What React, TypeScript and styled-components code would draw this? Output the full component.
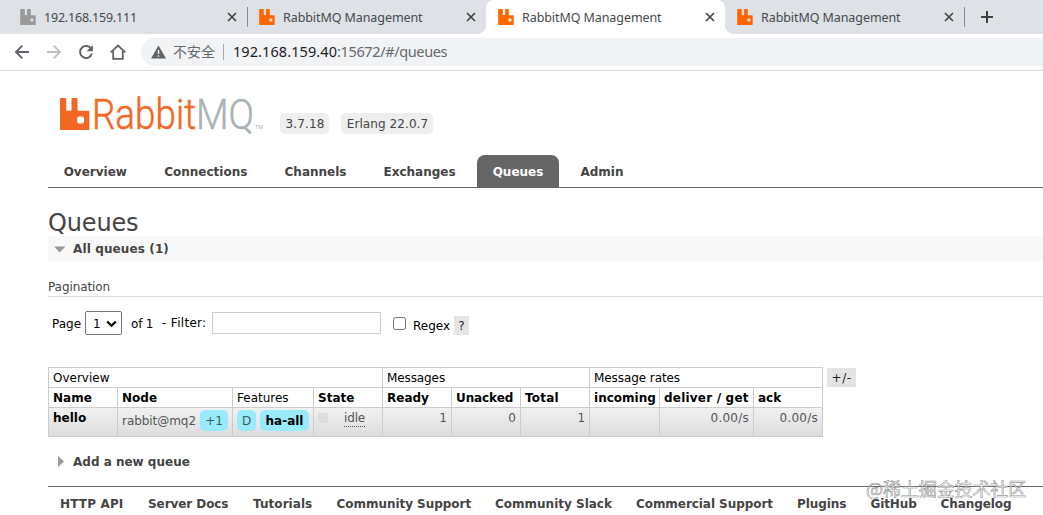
import React from 'react';
import styled, { createGlobalStyle, css } from 'styled-components';

const Global = createGlobalStyle`
  *, *::before, *::after { box-sizing: border-box; }
  html, body { margin: 0; background: #fff; }
  body {
    height: 515px;
    overflow: hidden;
    font: 12px/20px "DejaVu Sans", Verdana, sans-serif;
    color: #444;
  }
`;

const Page = styled.div`
  position: relative;
  height: 515px;
  overflow: hidden;
`;

/* Browser chrome */

const TabStrip = styled.div`
  display: flex;
  height: 34px;
  padding-left: 8px;
  background: #dee1e6;
`;

const BrowserTab = styled.div<{ $active?: boolean; $divider?: boolean }>`
  position: relative;
  display: flex;
  align-items: center;
  width: 239px;
  height: 34px;
  padding: 0 9px 0 12px;
  font: 12.5px/18px "Noto Sans", sans-serif;
  color: #45494d;
  ${p => p.$divider && css`
    &::after {
      content: '';
      position: absolute;
      right: -1px;
      top: 7px;
      width: 1px;
      height: 20px;
      background: #85888c;
    }
  `}
  ${p => p.$active && css`
    background: #fff;
    border-radius: 8px 8px 0 0;
    &::before, &::after {
      content: '';
      position: absolute;
      bottom: 0;
      width: 8px;
      height: 8px;
    }
    &::before {
      left: -8px;
      background: radial-gradient(circle at 0 0, #dee1e6 7.5px, #fff 8px);
    }
    &::after {
      right: -8px;
      background: radial-gradient(circle at 100% 0, #dee1e6 7.5px, #fff 8px);
    }
  `}
`;

const TabTitle = styled.span<{ $spacing: number }>`
  flex: 1;
  margin-left: 8px;
  padding-top: 1px;
  letter-spacing: ${p => p.$spacing}px;
  white-space: nowrap;
`;

const NewTab = styled.div`
  display: flex;
  align-items: center;
  margin-left: 16px;
`;

const Toolbar = styled.div`
  display: flex;
  align-items: center;
  height: 37px;
  padding: 0 0 1px 14px;
  border-bottom: 1px solid #d5d7da;
  background: #fff;
`;

const ToolButton = styled.span<{ $gap: number }>`
  display: flex;
  width: 16px;
  margin-right: ${p => p.$gap}px;
`;

const AddressBar = styled.div`
  display: flex;
  flex: 1;
  align-items: center;
  height: 28px;
  padding-left: 10px;
  border-radius: 14px 0 0 14px;
  background: #f1f3f4;
  font: 14.5px/20px "Noto Sans", "Noto Sans CJK SC", sans-serif;
  color: #66696d;
  white-space: nowrap;
`;

const Insecure = styled.span`
  margin: 0 9px 0 7px;
  padding-right: 8px;
  border-right: 1px solid #a5a8ac;
  font: 14px/14px "Noto Sans CJK SC", sans-serif;
  padding-bottom: 2px;
`;

const Host = styled.span`
  padding-bottom: 2px;
  color: #202124;
  letter-spacing: 0.08px;
`;

const Path = styled.span`
  padding-bottom: 2px;
  letter-spacing: -0.37px;
`;

/* Page */

const Content = styled.div`
  padding-left: 48px;
`;

const Header = styled.header`
  display: flex;
  height: 84px;
  padding: 24px 0 0 12px;
`;

const LogoBox = styled.div`
  width: 220px;
  height: 42px;
`;

const Version = styled.span<{ $width: number; $spacing: number }>`
  width: ${p => p.$width}px;
  height: 21px;
  margin: 18px 12px 0 0;
  padding-left: 1px;
  border-radius: 5px;
  background: #eee;
  text-align: center;
  line-height: 22px;
  letter-spacing: ${p => p.$spacing}px;
`;

const Nav = styled.nav`
  display: flex;
  height: 33px;
  border-bottom: 1px solid #666;
`;

const NavItem = styled.a<{ $width: number; $selected?: boolean }>`
  width: ${p => p.$width}px;
  height: 32px;
  margin-right: 6px;
  border-radius: 8px 8px 0 0;
  text-align: center;
  font-weight: bold;
  line-height: 34px;
  ${p => p.$selected && css`
    background: #666;
    color: #fff;
  `}
`;

const Title = styled.h1`
  height: 48px;
  margin: 0;
  padding-top: 21px;
  font-size: 24px;
  font-weight: normal;
  line-height: 29px;
  letter-spacing: -0.15px;
`;

const SectionBar = styled.h2<{ $open?: boolean }>`
  display: flex;
  align-items: center;
  height: 25px;
  margin: 0;
  padding-left: 6px;
  background: ${p => (p.$open ? '#f8f8f8' : 'transparent')};
  font-size: 12px;
  letter-spacing: ${p => (p.$open ? 0.12 : 0)}px;
`;

const Arrow = styled.svg`
  width: 12px;
  height: 12px;
  margin-right: 7px;
  fill: #999;
`;

const Pagination = styled.h3`
  height: 36px;
  margin: 0;
  padding-top: 16px;
  border-bottom: 1px solid #ddd;
  font-size: 12px;
  font-weight: normal;
  line-height: 20px;
  letter-spacing: -0.08px;
`;

const FilterRow = styled.div`
  display: flex;
  align-items: center;
  height: 70px;
  padding: 0 0 18px 4px;
  color: #000;
  white-space: pre;
`;

const PageLabel = styled.span`
  padding-top: 1px;
`;

const PageSelect = styled.span`
  display: flex;
  align-items: center;
  justify-content: space-between;
  width: 37px;
  height: 24px;
  margin: 0 9px 0 4px;
  padding: 1px 4px 0 7px;
  border: 1px solid #767676;
  border-radius: 2px;
`;

const OfPages = styled.span`
  width: 31px;
  padding-top: 1px;
  letter-spacing: -0.2px;
`;

const FilterLabel = styled.span`
  letter-spacing: 0.3px;
`;

const FilterInput = styled.input`
  width: 169px;
  height: 22px;
  margin: 0 12px 0 5.5px;
  border: 1px solid #ccc;
  outline: none;
`;

const RegexBox = styled.span`
  width: 13px;
  height: 13px;
  margin-right: 7px;
  border: 1px solid #767676;
  border-radius: 2.5px;
`;

const RegexLabel = styled.span`
  padding-top: 5px;
`;

const Chip = styled.span<{ $width: number; $spacing?: number }>`
  width: ${p => p.$width}px;
  height: 19px;
  background: #e4e4e4;
  color: #222;
  text-align: center;
  line-height: 20px;
  letter-spacing: ${p => p.$spacing ?? 0}px;
`;

const Help = styled(Chip)`
  margin: 5px 0 0 4px;
`;

const ColumnToggle = styled(Chip)`
  margin-top: 1px;
`;

const TableRow = styled.div`
  display: flex;
  align-items: flex-start;
  gap: 4px;
`;

const Table = styled.table`
  width: 775px;
  table-layout: fixed;
  border-spacing: 0;
  border: solid #ccc;
  border-width: 1px 0 0 1px;
  color: #000;
`;

const HeadCell = styled.th<{ $plain?: boolean; $spacing?: number }>`
  height: 20px;
  padding: 1px 4px 0;
  border: solid #ccc;
  border-width: 0 1px 1px 0;
  text-align: left;
  font-weight: ${p => (p.$plain ? 'normal' : 'bold')};
  line-height: 18px;
  letter-spacing: ${p => p.$spacing ?? 0}px;
  white-space: nowrap;
`;

const BodyRow = styled.tr`
  background: linear-gradient(#f1f1f1, #dcdcdc);
`;

const Cell = styled.td<{ $align?: string; $strong?: boolean; $spacing?: number }>`
  height: 29px;
  padding: 0 4px;
  border: solid #ccc;
  border-width: 0 1px 1px 0;
  vertical-align: top;
  text-align: ${p => p.$align ?? 'left'};
  line-height: 20px;
  letter-spacing: ${p => p.$spacing ?? 0}px;
  font-weight: ${p => (p.$strong ? 'bold' : 'normal')};
  color: ${p => (p.$strong ? '#000' : '#555')};
  white-space: nowrap;
`;

const Inline = styled.div`
  display: flex;
  align-items: center;
  gap: 4px;
  padding-top: 2px;
`;

const NodeName = styled.span`
  width: 74px;
  letter-spacing: -0.05px;
`;

const Tag = styled.span<{ $width: number; $strong?: boolean }>`
  width: ${p => p.$width}px;
  height: 21px;
  border-radius: 5px;
  background: #98eafc;
  text-align: center;
  line-height: 22px;
  font-weight: ${p => (p.$strong ? 'bold' : 'normal')};
  color: ${p => (p.$strong ? '#000' : '#3c5a60')};
`;

const State = styled.div`
  display: flex;
  align-items: center;
  gap: 16px;
  height: 20px;
`;

const StateDot = styled.span`
  width: 10px;
  height: 10px;
  background: #ddd;
`;

const StateText = styled.span`
  height: 17px;
  border-bottom: 1px dotted #555;
  line-height: 17px;
  letter-spacing: -0.15px;
`;

const AddQueue = styled.div`
  padding-top: 12px;
`;

const Footer = styled.footer`
  display: flex;
  gap: 24px;
  margin-top: 12px;
  padding: 6px 0 0 12px;
  border-top: 1px solid #666;
  font-weight: bold;
  line-height: 22px;
`;

const FooterLink = styled.a<{ $width: number; $spacing: number }>`
  width: ${p => p.$width}px;
  letter-spacing: ${p => p.$spacing}px;
  white-space: nowrap;
`;

const Watermark = styled.div`
  position: absolute;
  left: 866px;
  top: 475px;
  font: 18px/26px "Noto Sans CJK SC", sans-serif;
  letter-spacing: -0.1px;
  color: rgba(255, 255, 255, 0.75);
  -webkit-text-stroke: 0.6px rgba(120, 120, 120, 0.8);
  white-space: nowrap;
`;

const Favicon = ({ color = '#f60' }: { color?: string }) => (
  <svg width="16" height="16" viewBox="0 0 16 16">
    <path
      fill={color}
      fillRule="evenodd"
      d="M.8 0h3.400q.6 0 .6.600v5q0 .6.600.600h1.100q.6 0 .6-.600v-5q0-.6.600-.600h2.500q.6 0 .6.600v5q0 .6.600.600h3.700q.6 0 .6.600v8.600q0 .6-.6.600H.8q-.6 0-.6-.6V.6Q.2 0 .8 0zM11.400 9.600a1 1 0 0 0-1 1v1a1 1 0 0 0 1 1h1a1 1 0 0 0 1-1v-1a1 1 0 0 0-1-1z"
    />
  </svg>
);

const Close = () => (
  <svg width="12" height="12" viewBox="0 0 12 12" fill="none" stroke="#3c4043" strokeWidth="1.6">
    <path d="M2 2l8 8M10 2l-8 8" />
  </svg>
);

const Logo = () => (
  <svg width="220" height="42" viewBox="0 0 220 42">
    <path
      fill="#f26724"
      fillRule="evenodd"
      d="M.8 3h4.600q.8 0 .8.800v11.200q0 .8.800.800h3.700q.8 0 .8-.800V3.800q0-.8.800-.800h4.400q.8 0 .8.800v11.200q0 .8.800.800h10.300q.8 0 .8.800v17.600q0 .8-.8.800H.8q-.8 0-.8-.8V3.800q0-.8.800-.800zM19 21.500a1.800 1.800 0 0 0-1.800 1.800v3.400a1.800 1.800 0 0 0 1.800 1.800h3.200a1.800 1.800 0 0 0 1.800-1.800v-3.400a1.800 1.800 0 0 0-1.800-1.800z"
    />
    <g fontFamily="Roboto, sans-serif" fontWeight="300" fontSize="42.500">
      <text x="32" y="33.700" fill="#f26724" stroke="#f26724" strokeWidth="0.5" textLength="104" lengthAdjust="spacingAndGlyphs">Rabbit</text>
      <text x="136" y="33.700" fill="#a9b3b1" stroke="#a9b3b1" strokeWidth="0.5" textLength="58" lengthAdjust="spacingAndGlyphs">MQ</text>
      <text x="195" y="33.700" fill="#a9b3b1" fontSize="6" fontWeight="400" textLength="8" lengthAdjust="spacingAndGlyphs">TM</text>
    </g>
  </svg>
);

const browserTabs = [
  { title: '192.168.159.111', color: '#999', spacing: -0.2, divider: true },
  { title: 'RabbitMQ Management', spacing: -0.08 },
  { title: 'RabbitMQ Management', spacing: -0.08, active: true },
  { title: 'RabbitMQ Management', spacing: -0.08, divider: true },
];

const navItems: [string, number][] = [
  ['Overview', 94.5], ['Connections', 114.5], ['Channels', 93], ['Exchanges', 103], ['Queues', 82], ['Admin', 74],
];

const footerLinks: [string, number, number][] = [
  ['HTTP API', 64, 0.16], ['Server Docs', 81, -0.07], ['Tutorials', 59.5, 0.06],
  ['Community Support', 134.5, -0.04], ['Community Slack', 117, 0], ['Commercial Support', 137, -0.06],
  ['Plugins', 49.5, -0.08], ['GitHub', 46, -0.12], ['Changelog', 72, -0.07],
];

const columns = [69, 115, 81, 69, 69, 69, 69, 70, 94, 69];

export default function App() {
  return (
    <>
      <Global />
      <Page>
        <TabStrip>
          {browserTabs.map((tab, i) => (
            <BrowserTab key={i} $active={tab.active} $divider={tab.divider}>
              <Favicon color={tab.color} />
              <TabTitle $spacing={tab.spacing}>{tab.title}</TabTitle>
              <Close />
            </BrowserTab>
          ))}
          <NewTab>
            <svg width="14" height="14" viewBox="0 0 14 14" stroke="#3c4043" strokeWidth="2">
              <path d="M7 1v12M1 7h12" />
            </svg>
          </NewTab>
        </TabStrip>
        <Toolbar>
          <ToolButton $gap={16}>
            <svg width="16" height="16" viewBox="0 0 16 16" fill="none" stroke="#5f6368" strokeWidth="1.9">
              <path d="M15 8H2.500M8.300 1.700L2 8l6.300 6.300" />
            </svg>
          </ToolButton>
          <ToolButton $gap={16}>
            <svg width="16" height="16" viewBox="0 0 16 16" fill="none" stroke="#bdc0c3" strokeWidth="1.9">
              <path d="M1 8h12.500M7.700 1.700L14 8l-6.300 6.300" />
            </svg>
          </ToolButton>
          <ToolButton $gap={16}>
            <svg width="16" height="16" viewBox="0 0 16 16" fill="none" stroke="#5f6368" strokeWidth="1.9">
              <path d="M13.300 5A6 6 0 1 0 13.900 9.500" />
              <path d="M14.800 1v6.200H8.600z" fill="#5f6368" stroke="none" />
            </svg>
          </ToolButton>
          <ToolButton $gap={15}>
            <svg width="16" height="16" viewBox="0 0 16 16" fill="none" stroke="#5f6368" strokeWidth="1.8">
              <path d="M.7 8.300L8 1.500l7.300 6.800M3.200 7v7.800h9.600V7" />
            </svg>
          </ToolButton>
          <AddressBar>
            <svg width="15" height="14" viewBox="0 0 15 14">
              <path d="M7.500.5L15 13.500H0z" fill="#5f6368" />
              <path d="M7.500 5v4M7.500 10.200v1.600" stroke="#f1f3f4" strokeWidth="1.500" />
            </svg>
            <Insecure>不安全</Insecure>
            <Host>192.168.159.40</Host>
            <Path>:15672/#/queues</Path>
          </AddressBar>
        </Toolbar>

        <Content>
          <Header>
            <LogoBox><Logo /></LogoBox>
            <Version $width={49} $spacing={0.14}>3.7.18</Version>
            <Version $width={92} $spacing={0.08}>Erlang 22.0.7</Version>
          </Header>
          <Nav>
            {navItems.map(([label, width]) => (
              <NavItem key={label} $width={width} $selected={label === 'Queues'}>{label}</NavItem>
            ))}
          </Nav>
          <Title>Queues</Title>
          <SectionBar $open>
            <Arrow viewBox="0 0 12 12"><path d="M0 3.500h11.500L5.750 9.500z" /></Arrow>
            All queues (1)
          </SectionBar>
          <Pagination>Pagination</Pagination>
          <FilterRow>
            <PageLabel>Page</PageLabel>
            <PageSelect>
              1
              <svg width="11" height="8" viewBox="0 0 11 8" fill="none" stroke="#000" strokeWidth="2.200">
                <path d="M1.200 1.500l4.300 4.300 4.300-4.300" />
              </svg>
            </PageSelect>
            <OfPages>of 1</OfPages>
            <FilterLabel>- Filter:</FilterLabel>
            <FilterInput />
            <RegexBox />
            <RegexLabel>Regex</RegexLabel>
            <Help $width={15}>?</Help>
          </FilterRow>

          <TableRow>
            <Table>
              <colgroup>{columns.map((w, i) => <col key={i} style={{ width: w }} />)}</colgroup>
              <thead>
                <tr>
                  <HeadCell $plain colSpan={4}>Overview</HeadCell>
                  <HeadCell $plain colSpan={3} $spacing={-0.1}>Messages</HeadCell>
                  <HeadCell $plain colSpan={3} $spacing={-0.08}>Message rates</HeadCell>
                </tr>
                <tr>
                  <HeadCell>Name</HeadCell>
                  <HeadCell>Node</HeadCell>
                  <HeadCell $plain>Features</HeadCell>
                  <HeadCell>State</HeadCell>
                  <HeadCell>Ready</HeadCell>
                  <HeadCell $spacing={-0.1}>Unacked</HeadCell>
                  <HeadCell $spacing={0.2}>Total</HeadCell>
                  <HeadCell>incoming</HeadCell>
                  <HeadCell $spacing={0.2}>deliver / get</HeadCell>
                  <HeadCell>ack</HeadCell>
                </tr>
              </thead>
              <tbody>
                <BodyRow>
                  <Cell $strong>hello</Cell>
                  <Cell>
                    <Inline><NodeName>rabbit@mq2</NodeName><Tag $width={28}>+1</Tag></Inline>
                  </Cell>
                  <Cell>
                    <Inline><Tag $width={19}>D</Tag><Tag $width={49} $strong>ha-all</Tag></Inline>
                  </Cell>
                  <Cell>
                    <State><StateDot /><StateText>idle</StateText></State>
                  </Cell>
                  <Cell $align="right">1</Cell>
                  <Cell $align="right">0</Cell>
                  <Cell $align="right">1</Cell>
                  <Cell />
                  <Cell $align="right" $spacing={0.25}>0.00/s</Cell>
                  <Cell $align="right" $spacing={0.25}>0.00/s</Cell>
                </BodyRow>
              </tbody>
            </Table>
            <ColumnToggle $width={29} $spacing={0.5}>+/-</ColumnToggle>
          </TableRow>

          <AddQueue>
            <SectionBar>
              <Arrow viewBox="0 0 12 12"><path d="M4 0v11L10 5.500z" /></Arrow>
              Add a new queue
            </SectionBar>
          </AddQueue>
          <Footer>
            {footerLinks.map(([label, width, spacing]) => (
              <FooterLink key={label} $width={width} $spacing={spacing}>{label}</FooterLink>
            ))}
          </Footer>
        </Content>
        <Watermark>@稀土掘金技术社区</Watermark>
      </Page>
    </>
  );
}
